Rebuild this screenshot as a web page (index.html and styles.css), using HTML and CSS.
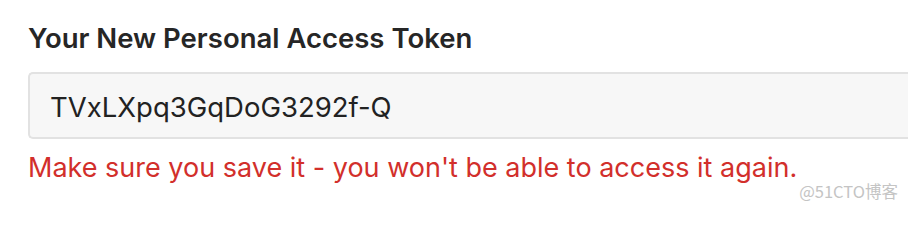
FILE: index.html
```html
<!DOCTYPE html>
<html>
<head>
<meta charset="utf-8">
<link rel="stylesheet" href="styles.css">
</head>
<body>
<div class="page">
  <div class="field">
    <label class="field-label">Your New Personal Access Token</label>
    <div class="token-box">TVxLXpq3GqDoG3292f-Q</div>
    <p class="warning">Make sure you save it - you won't be able to access it again.</p>
  </div>
  <div class="watermark">@51CTO博客</div>
</div>
</body>
</html>
```
FILE: styles.css
```css
html, body {
  margin: 0;
  padding: 0;
  background: #ffffff;
  overflow: hidden;
}
.page {
  position: relative;
  width: 908px;
  height: 212px;
  font-family: Inter, "Liberation Sans", sans-serif;
}
.field {
  padding: 22px 0 0 28px;
  display: flex;
  flex-direction: column;
}
.field-label {
  font-size: 27.5px;
  font-weight: 600;
  color: #262626;
  line-height: 32px;
}
.token-box {
  margin-top: 18px;
  width: 900px;
  height: 67px;
  box-sizing: border-box;
  border: 2px solid #e2e2e2;
  border-right: none;
  border-radius: 5px 0 0 5px;
  background: #f7f7f7;
  padding: 3px 0 0 20px;
  font-size: 27.5px;
  color: #222222;
  display: flex;
  align-items: center;
}
.warning {
  margin: 13px 0 0 0;
  font-size: 27px;
  line-height: 32px;
  color: #d22f2b;
}
.watermark {
  position: absolute;
  right: 10px;
  bottom: 9px;
  font-size: 16.5px;
  color: #c4c4c4;
  font-family: "Noto Sans CJK SC", sans-serif;
}
```
